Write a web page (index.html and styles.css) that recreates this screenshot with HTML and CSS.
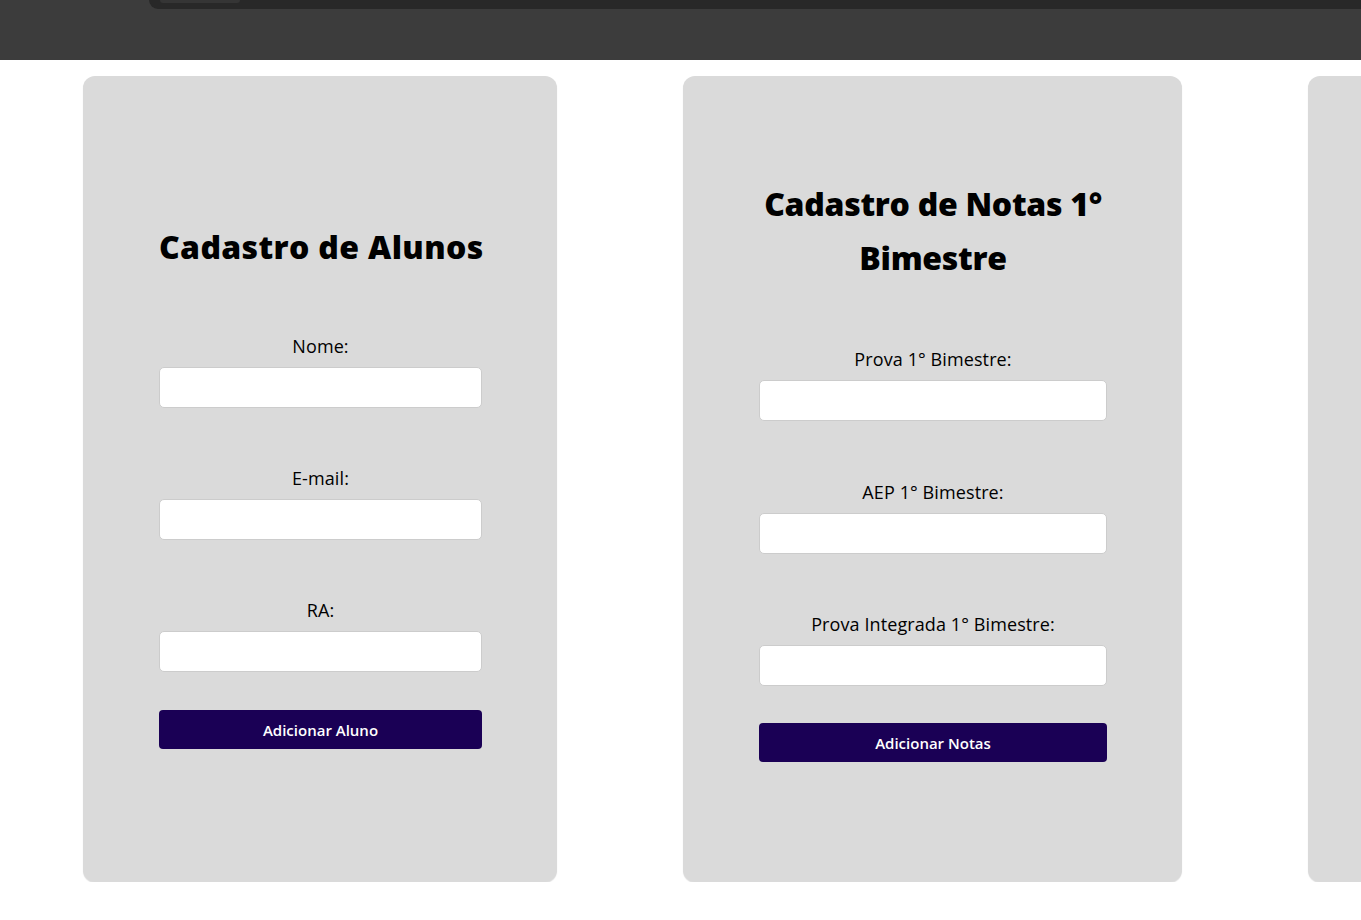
FILE: index.html
```html
<!DOCTYPE html>
<html lang="pt-BR">
<head>
<meta charset="utf-8">
<title>Cadastro</title>
<link rel="stylesheet" href="styles.css">
</head>
<body>
<header class="topbar">
  <div class="topbar-strip"><div class="topbar-tab"></div></div>
</header>
<main class="cards">
  <section class="card card-alunos">
    <h1 class="card-title">Cadastro de Alunos</h1>
    <form class="form">
      <div class="field">
        <label class="field-label" for="nome">Nome:</label>
        <input class="field-input" id="nome" type="text">
      </div>
      <div class="field">
        <label class="field-label" for="email">E-mail:</label>
        <input class="field-input" id="email" type="email">
      </div>
      <div class="field">
        <label class="field-label" for="ra">RA:</label>
        <input class="field-input" id="ra" type="text">
      </div>
      <button class="btn" type="button">Adicionar Aluno</button>
    </form>
  </section>
  <section class="card card-notas">
    <h1 class="card-title">Cadastro de Notas 1° Bimestre</h1>
    <form class="form">
      <div class="field">
        <label class="field-label" for="prova">Prova 1° Bimestre:</label>
        <input class="field-input" id="prova" type="text">
      </div>
      <div class="field">
        <label class="field-label" for="aep">AEP 1° Bimestre:</label>
        <input class="field-input" id="aep" type="text">
      </div>
      <div class="field">
        <label class="field-label" for="integrada">Prova Integrada 1° Bimestre:</label>
        <input class="field-input" id="integrada" type="text">
      </div>
      <button class="btn" type="button">Adicionar Notas</button>
    </form>
  </section>
  <section class="card card-extra"></section>
</main>
</body>
</html>
```
FILE: styles.css
```css
* { box-sizing: border-box; }

html, body {
  margin: 0;
  padding: 0;
  background: #ffffff;
  font-family: "Open Sans", "Noto Sans", sans-serif;
  color: #000;
  overflow: hidden;
}

.topbar {
  height: 60px;
  background: #3c3c3c;
  display: flex;
  align-items: flex-start;
}

.topbar-strip {
  margin-left: 149px;
  flex: 1;
  height: 9px;
  background: #282828;
  border-bottom-left-radius: 10px;
  display: flex;
  align-items: flex-start;
}

.topbar-tab {
  margin-left: 11px;
  width: 80px;
  height: 3px;
  background: #353535;
  border-bottom-left-radius: 4px;
  border-bottom-right-radius: 4px;
}

.cards {
  display: flex;
  gap: 126px;
  padding: 16px 0 0 83px;
  overflow: hidden;
}

.card {
  flex-shrink: 0;
  height: 806px;
  background: #dadada;
  border-radius: 12px;
  box-shadow: 0 1px 1px rgba(0, 0, 0, 0.12);
}

.card-alunos {
  width: 474px;
  padding: 144px 75px 0 76px;
}

.card-notas {
  width: 499px;
  padding: 101px 75px 0 76px;
}

.card-extra {
  width: 474px;
}

.card-title {
  margin: 0 0 61px;
  font-size: 32px;
  line-height: 54px;
  font-weight: 800;
  text-align: center;
  letter-spacing: 0.35px;
  white-space: nowrap;
}

.card-notas .card-title {
  margin-bottom: 63px;
  letter-spacing: -0.3px;
  white-space: normal;
}

.form {
  display: flex;
  flex-direction: column;
}

.field {
  display: flex;
  flex-direction: column;
  margin-bottom: 59px;
}

.card-notas .field:nth-child(1) {
  margin-bottom: 60px;
}

.field:nth-child(3) {
  margin-bottom: 38px;
}

.card-notas .field:nth-child(3) {
  margin-bottom: 37px;
}

.field-label {
  display: block;
  font-size: 18px;
  line-height: 22px;
  text-align: center;
  margin-bottom: 10px;
  letter-spacing: 0.1px;
}

.field-input {
  height: 41px;
  width: 100%;
  border: 1px solid #cccccc;
  border-radius: 5px;
  background: #ffffff;
  font: inherit;
  padding: 0 10px;
}

.btn {
  height: 39px;
  width: 100%;
  border: none;
  border-radius: 4px;
  background: #1a0055;
  color: #ffffff;
  font-family: "Open Sans", "Noto Sans", sans-serif;
  font-size: 15px;
  font-weight: 600;
  cursor: pointer;
}
```
